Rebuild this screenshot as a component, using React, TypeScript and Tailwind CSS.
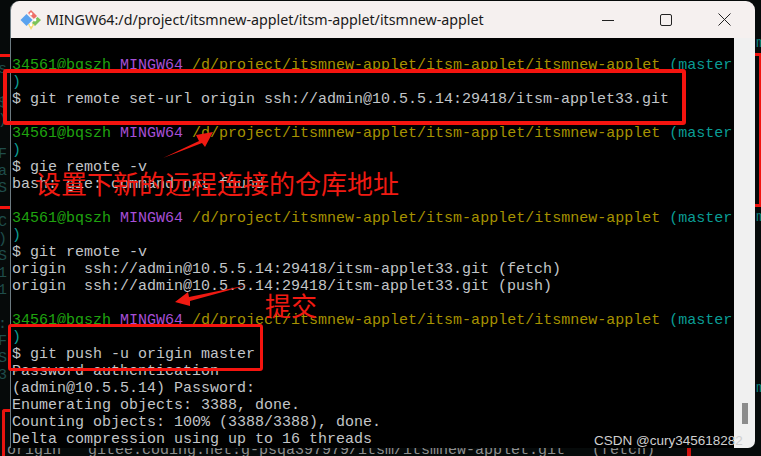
import React from "react";

const PATH = "/d/project/itsmnew-applet/itsm-applet/itsmnew-applet";

function Prompt() {
  return (
    <div className="h-[17px] whitespace-pre">
      <span className="text-[#1fa30f]">34561@bqszh</span>{" "}
      <span className="text-[#a64fd6]">MINGW64</span>{" "}
      <span className="text-[#a69200]">{PATH}</span>{" "}
      <span className="text-[#0a9c94]">(master</span>
    </div>
  );
}

function Paren() {
  return <div className="h-[17px] text-[#0a9c94]">)</div>;
}

function Line({ children }: { children?: React.ReactNode }) {
  return <div className="h-[17px] whitespace-pre">{children}</div>;
}

function GitLogo() {
  return (
    <svg width="22" height="22" viewBox="0 0 22 22">
      <path d="M0.5 11 L6.5 5 L12.5 11 L6.5 17 Z" fill="#5aa2ee" />
      <path d="M8 4 L11 1 L17 7 L14 10 Z" fill="#ee6f68" />
      <path d="M14.5 11 L17.5 8 L21 11 L15 17 L12 14 Z" fill="#7cc35a" />
      <path d="M8 15 L14.5 15 L11 21 Z" fill="#f5d76e" />
      <circle cx="11" cy="5" r="1.4" fill="#fff" />
      <circle cx="15" cy="11" r="1.4" fill="#fff" />
      <circle cx="11" cy="16" r="1.4" fill="#fff" />
    </svg>
  );
}

export default function App() {
  return (
    <div className="relative h-[456px] w-[761px] overflow-hidden bg-[#060a0a] font-['Liberation_Mono',monospace] text-[15px] leading-[17px] text-[#c2c5c8]">
      {/* Window behind the terminal */}
      <div className="absolute left-[7px] top-[442px] whitespace-pre text-[#8f8f8f]">
        {"origin   gitee.coding.net:g-psqa397979/itsm/itsmnew-applet.git   (fetch)"}
      </div>
      <div className="absolute left-[687px] top-[447px] h-[9px] w-[4px] bg-[#d0100c]" />
      <div className="absolute left-0 top-[54px] h-[3px] w-[11px] bg-[#f5140f]" />
      <div className="absolute left-0 top-[206px] h-[3px] w-[11px] bg-[#f5140f]" />
      <div className="absolute left-[2px] top-[409px] h-[60px] w-[12px] rounded-tl-[3px] border-l-[3px] border-t-[3px] border-[#e8140f]" />
      <div className="absolute left-[-2px] top-[61px] flex w-[12px] flex-col overflow-hidden whitespace-pre text-[#1f4d4a]">
        <Line>s</Line>
        <Line> </Line>
        <Line>{"$"}</Line>
        <Line>{")"}</Line>
        <Line> </Line>
        <Line>F</Line>
        <Line>a</Line>
        <Line>S</Line>
        <Line> </Line>
        <Line>{"C"}</Line>
        <Line>{")"}</Line>
        <Line>S</Line>
        <Line>1</Line>
        <Line>1</Line>
        <Line> </Line>
        <Line>:</Line>
        <Line>F</Line>
        <Line>S</Line>
        <Line>3</Line>
      </div>
      <div className="absolute left-[756px] top-[35px] flex flex-col text-[#0a7f78]">
        <span>m</span>
        <span className="mt-[157px]">m</span>
        <span className="mt-[154px]">m</span>
      </div>
      <div className="absolute left-[755px] top-[53px] h-[154px] w-[6px] border-y-[3px] border-r-[2px] border-[#f0140f]" />

      {/* Terminal window */}
      <div className="relative ml-[10px] mt-[1px] flex h-[447px] w-[745px] flex-col overflow-hidden rounded-t-[9px] rounded-br-[7px] border-l border-[#6c7a80]">
        <div className="flex h-[37px] shrink-0 items-center bg-[#f5f0ef] pl-[9px] pr-[2px]">
          <GitLogo />
          <div className="ml-[4px] flex-1 whitespace-nowrap font-['Noto_Sans',sans-serif] text-[14.25px] leading-[20px] text-[#1a1a1a]">
            MINGW64:/d/project/itsmnew-applet/itsm-applet/itsmnew-applet
          </div>
          <div className="flex h-full w-[58px] items-center justify-center">
            <svg width="12" height="12" viewBox="0 0 12 12" stroke="#222" fill="none"><path d="M0 6.5H12" /></svg>
          </div>
          <div className="flex h-full w-[58px] items-center justify-center">
            <svg width="12" height="12" viewBox="0 0 12 12" stroke="#222" fill="none"><rect x="0.5" y="0.5" width="11" height="11" rx="1.5" /></svg>
          </div>
          <div className="flex h-full w-[58px] items-center justify-center">
            <svg width="13" height="13" viewBox="0 0 13 13" stroke="#222" fill="none"><path d="M0.5 0.5L12.5 12.5M12.5 0.5L0.5 12.5" /></svg>
          </div>
        </div>
        <div className="flex min-h-0 flex-1">
          <div className="min-w-0 flex-1 overflow-hidden bg-black pl-[1px] pt-[19px]">
            <Prompt />
            <Paren />
            <Line>$ git remote set-url origin ssh://admin@10.5.5.14:29418/itsm-applet33.git</Line>
            <Line />
            <Prompt />
            <Paren />
            <Line>$ gie remote -v</Line>
            <Line>bash: gie: command not found</Line>
            <Line />
            <Prompt />
            <Paren />
            <Line>$ git remote -v</Line>
            <Line>origin  ssh://admin@10.5.5.14:29418/itsm-applet33.git (fetch)</Line>
            <Line>origin  ssh://admin@10.5.5.14:29418/itsm-applet33.git (push)</Line>
            <Line />
            <Prompt />
            <Paren />
            <Line>$ git push -u origin master</Line>
            <Line>Password authentication</Line>
            <Line>(admin@10.5.5.14) Password:</Line>
            <Line>Enumerating objects: 3388, done.</Line>
            <Line>Counting objects: 100% (3388/3388), done.</Line>
            <Line>Delta compression using up to 16 threads</Line>
          </div>
          <div className="flex w-[21px] shrink-0 flex-col items-center bg-[#f0f0f0] pt-[365px]">
            <div className="h-[21px] w-[6px] bg-[#8c8c8c]" />
          </div>
        </div>
      </div>

      {/* Annotations drawn over the screenshot */}
      <div className="absolute left-[3px] top-[69px] h-[56px] w-[683px] rounded-[3px] border-[4px] border-[#f5140f]" />
      <div className="absolute left-[8px] top-[324px] h-[47px] w-[255px] rounded-[3px] border-[3px] border-[#f5140f]" />
      <svg className="absolute left-0 top-0" width="761" height="456" viewBox="0 0 761 456" fill="#f01a12">
        <path d="M163 158 L199 141 L196 135 L213 132 L205 147 L202 143 Z" />
        <path d="M248 285 L189 297 L188 292 L175 302 L190 306 L190 301 Z" />
      </svg>
      <div className="absolute left-[35px] top-[164px] whitespace-nowrap font-['Noto_Sans_CJK_SC',sans-serif] text-[26px] leading-[38px] text-[#f01a12]">
        设置下新的远程连接的仓库地址
      </div>
      <div className="absolute left-[265px] top-[286px] whitespace-nowrap font-['Noto_Sans_CJK_SC',sans-serif] text-[26px] leading-[38px] text-[#f01a12]">
        提交
      </div>
      <div className="absolute left-[594px] top-[432px] whitespace-nowrap font-['Liberation_Sans',sans-serif] text-[13.5px] leading-[18px] text-[#cfcfcf]">
        CSDN @cury345618282
      </div>
    </div>
  );
}
